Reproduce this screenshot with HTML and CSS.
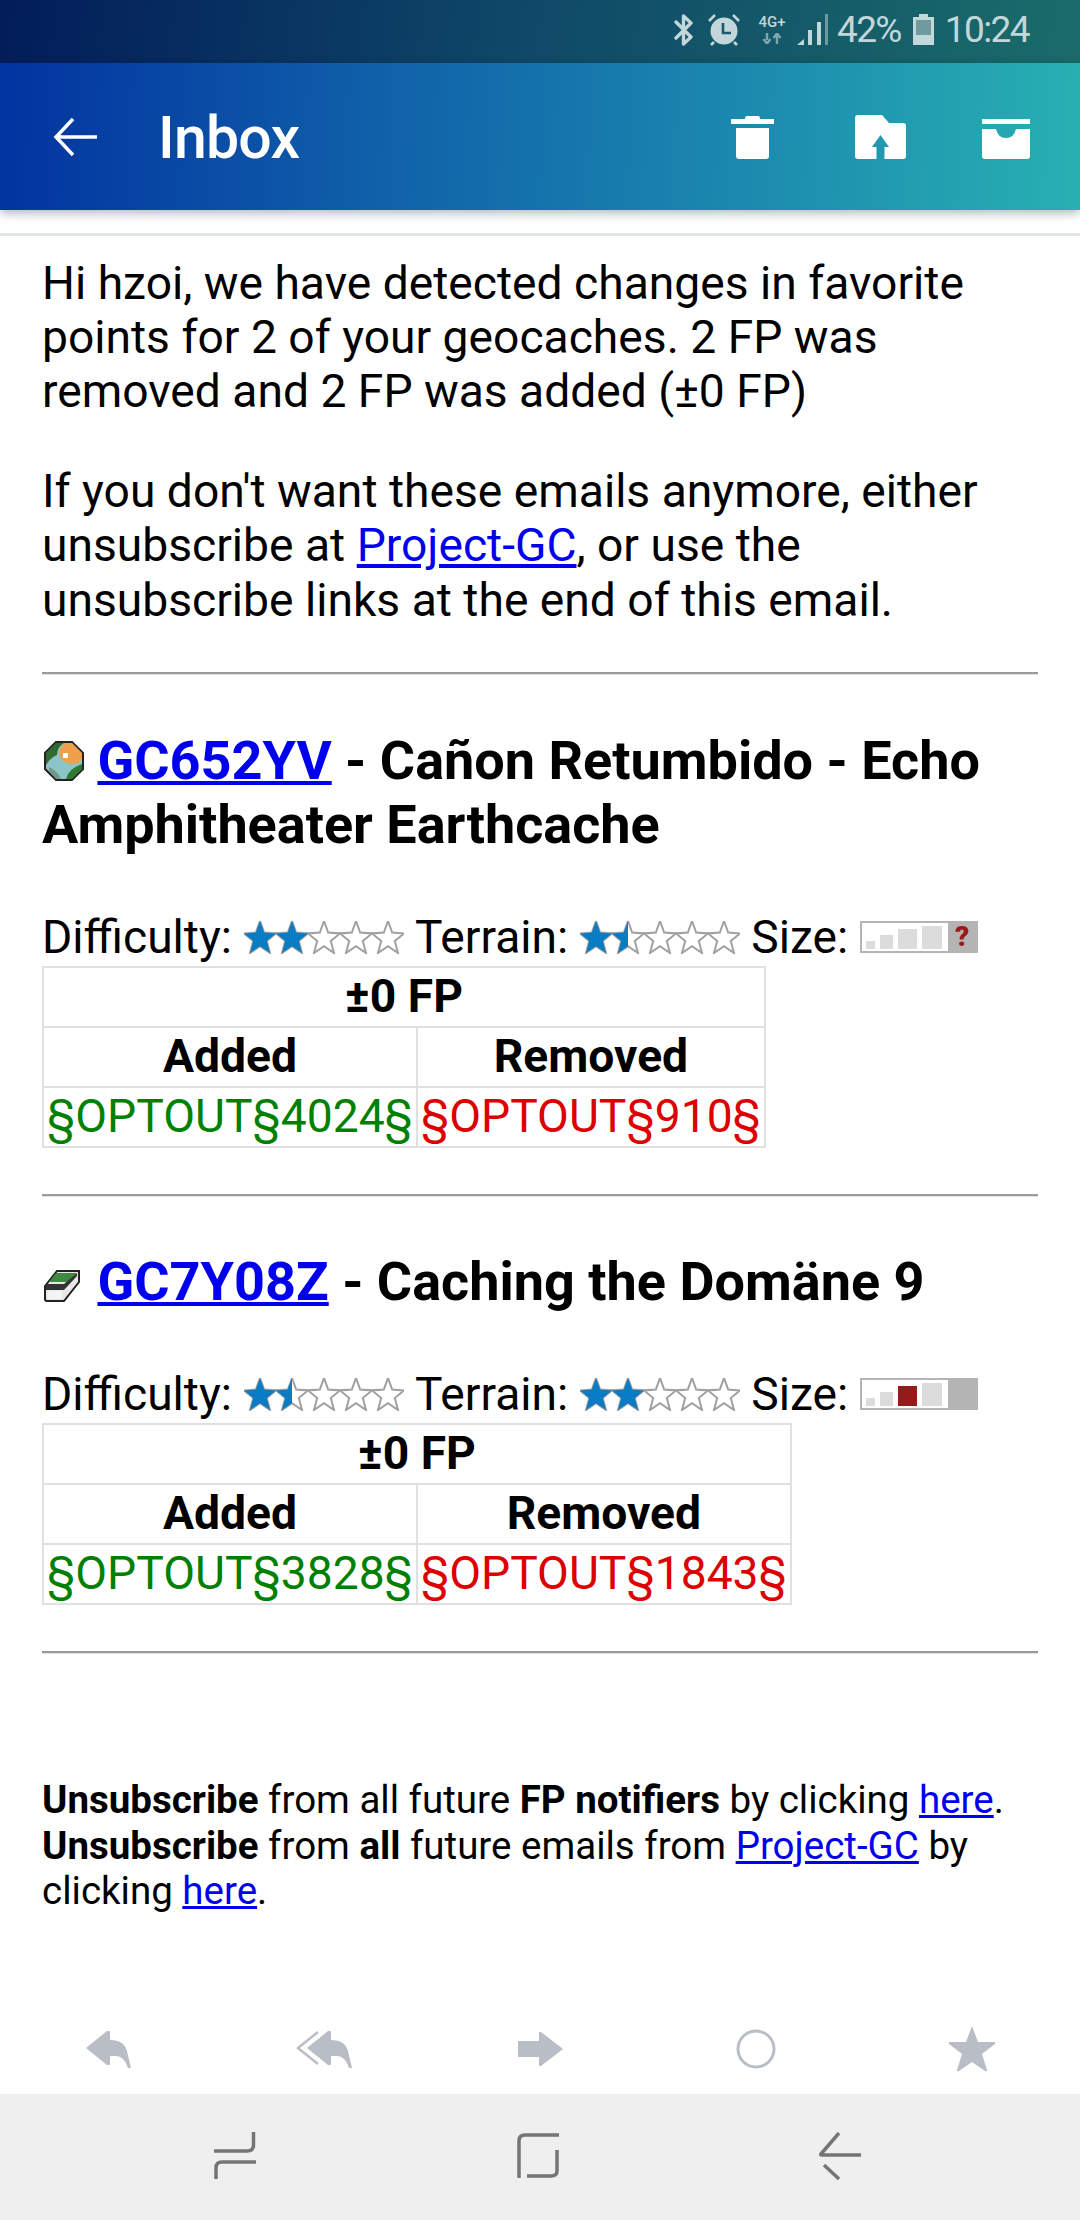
FILE: index.html
```html
<!DOCTYPE html>
<html lang="en">
<head>
  <meta charset="UTF-8" />
  <title>Inbox</title>
  <link rel="stylesheet" href="styles.css">
</head>
<body>
  <svg class="defs" width="0" height="0">
    <defs>
      <path id="star" d="M16 0 L20.2 11.6 L32 12.4 L22.8 20 L26 32 L16 25.2 L6 32 L9.2 20 L0 12.4 L11.8 11.6Z"/>
      <g id="empty-stars">
        <use href="#star" x="0" class="star-empty"/>
        <use href="#star" x="32" class="star-empty"/>
        <use href="#star" x="64" class="star-empty"/>
        <use href="#star" x="96" class="star-empty"/>
        <use href="#star" x="128" class="star-empty"/>
      </g>
      <clipPath id="half"><rect x="0" y="0" width="48" height="33"/></clipPath>
    </defs>
  </svg>

  <div class="status-bar">
    <svg class="st-icon" width="20" height="32" viewBox="0 0 20 32"><path d="M2 8 L17 23 L9.5 30 V2 L17 9 L2 24" fill="none" stroke="#c3d6da" stroke-width="3.4" stroke-linejoin="round" stroke-linecap="round"/></svg>
    <svg class="st-icon st-alarm" width="32" height="32" viewBox="0 0 32 32">
      <circle cx="16" cy="17" r="13.5" fill="#c3d6da"/>
      <path d="M15 9 V19 H23" fill="none" stroke="#1a5a70" stroke-width="2.6"/>
      <path d="M1 7 L7 1 M25 1 L31 7 M6 28 L3 31 M26 28 L29 31" stroke="#c3d6da" stroke-width="2.6" fill="none"/>
    </svg>
    <div class="net">
      <span class="net-label">4G+</span>
      <svg width="20" height="11" viewBox="0 0 20 11"><path d="M5 0 V7 M1.5 6 L5 10.500 L8.500 6 M15 11 V3 M11.500 5 L15 0.500 L18.500 5" fill="none" stroke="#7fa5ad" stroke-width="2.4"/></svg>
    </div>
    <svg class="st-icon st-signal" width="32" height="32" viewBox="0 0 32 32">
      <path d="M0 31 L7 25 V31Z" fill="#c3d6da"/>
      <rect x="11" y="16" width="4" height="15" fill="#c3d6da"/>
      <rect x="20" y="8" width="4" height="23" fill="#c3d6da"/>
      <rect x="28" y="0" width="3" height="31" fill="#6f99a0"/>
    </svg>
    <span class="st-text st-pct">42%</span>
    <svg class="st-icon st-batt" width="22" height="32" viewBox="0 0 22 32">
      <path d="M6 0 H15 V3 H21 V31 H0 V3 H6Z" fill="#c3d6da"/>
      <rect x="3" y="6" width="15" height="15" fill="#6f9aa0"/>
    </svg>
    <span class="st-text">10:24</span>
  </div>

  <header class="toolbar">
    <svg class="back" width="44" height="40" viewBox="0 0 44 40"><path d="M20 2 L3 20 L20 38 M3 20 H44" fill="none" stroke="#fff" stroke-width="3.500"/></svg>
    <span class="title">Inbox</span>
    <div class="actions">
      <svg width="43" height="44" viewBox="0 0 43 44"><path d="M14 3 Q14 1 16 1 H27 Q29 1 29 3 V4 H43 V9 H0 V4 H14Z M5 13 H38 V41 Q38 44 35 44 H8 Q5 44 5 41Z" fill="#fff"/></svg>
      <svg width="51" height="44" viewBox="0 0 51 44"><path d="M0 3 Q0 0 3 0 H27 L34 8 H48 Q51 8 51 11 V41 Q51 44 48 44 H29.500 V32 H34 L25.500 20 L17 32 H21.500 V44 H3 Q0 44 0 41Z" fill="#fff"/></svg>
      <svg width="48" height="40" viewBox="0 0 48 40"><path d="M0 0 H48 V5 H0Z M0 10 H14 Q16 19 24 19 Q32 19 34 10 H48 V37 Q48 40 45 40 H3 Q0 40 0 37Z" fill="#fff"/></svg>
    </div>
  </header>

  <main class="mail">
    <hr class="top-rule">
    <p>Hi hzoi, we have detected changes in favorite points for 2 of your geocaches. 2 FP was removed and 2 FP was added (±0 FP)</p>
    <p>If you don't want these emails anymore, either unsubscribe at <a href="#">Project-GC</a>, or use the unsubscribe links at the end of this email.</p>
    <hr>

    <h3>
      <svg class="cache-icon" width="40" height="40" viewBox="0 0 40 40">
        <path d="M12 1 H28 L39 12 V28 L28 39 H12 L1 28 V12Z" fill="#8cc4c8" stroke="#222" stroke-width="2"/>
        <path d="M12 2 H20 Q13 6 13 14 Q7 16 2 24 V12Z" fill="#2f6b2f"/>
        <path d="M20 2 H28 L38 12 V18 Q34 24 26 23 Q16 20 15 12 Q16 6 20 2Z" fill="#f0a04a"/>
        <path d="M38 23 V28 L28 38 H22 Q24 28 38 23Z" fill="#2f7a2f"/>
        <path d="M5 26 Q14 30 17 38 H12 L5 30Z" fill="#6f9a8a"/>
        <rect x="19" y="12" width="5" height="5" fill="#fff"/>
      </svg>
      <a href="#">GC652YV</a> - Cañon Retumbido - Echo Amphitheater Earthcache
    </h3>
    <div class="attrs">
      <span>Difficulty:</span>
      <svg class="stars" width="160" height="33" viewBox="0 0 160 33"><use href="#empty-stars"/><g class="star-full"><use href="#star" x="0"/><use href="#star" x="32"/></g></svg>
      <span>Terrain:</span>
      <svg class="stars" width="160" height="33" viewBox="0 0 160 33"><use href="#empty-stars"/><g class="star-full" clip-path="url(#half)"><use href="#star" x="0"/><use href="#star" x="32"/></g></svg>
      <span>Size:</span>
      <div class="size-box">
        <div class="size-bars">
          <i class="bar bar-1"></i><i class="bar bar-2"></i><i class="bar bar-3"></i><i class="bar bar-4"></i>
        </div>
        <div class="size-end"><span class="size-q">?</span></div>
      </div>
    </div>
    <table>
      <tr><th colspan="2">±0 FP</th></tr>
      <tr><th>Added</th><th>Removed</th></tr>
      <tr><td class="added">§OPTOUT§4024§</td><td class="removed">§OPTOUT§910§</td></tr>
    </table>
    <hr class="after-table">

    <h3 class="single">
      <svg class="cache-icon box-icon" width="36" height="32" viewBox="0 0 36 32">
        <path d="M1 16 L13 1 H35 V12 L20 31 H3 Q1 31 1 29Z" fill="#e8e8e8" stroke="#222" stroke-width="2"/>
        <path d="M12 3 H33 L24 12 H5Z" fill="#3f8a3f"/>
        <path d="M2 14 H20 L33 3 V6 L20 20 H2Z" fill="#333"/>
        <rect x="4" y="21" width="14" height="8" fill="#f4f4f4"/>
      </svg>
      <a href="#">GC7Y08Z</a> - Caching the Domäne 9
    </h3>
    <div class="attrs">
      <span>Difficulty:</span>
      <svg class="stars" width="160" height="33" viewBox="0 0 160 33"><use href="#empty-stars"/><g class="star-full" clip-path="url(#half)"><use href="#star" x="0"/><use href="#star" x="32"/></g></svg>
      <span>Terrain:</span>
      <svg class="stars" width="160" height="33" viewBox="0 0 160 33"><use href="#empty-stars"/><g class="star-full"><use href="#star" x="0"/><use href="#star" x="32"/></g></svg>
      <span>Size:</span>
      <div class="size-box">
        <div class="size-bars">
          <i class="bar bar-1"></i><i class="bar bar-2"></i><i class="bar bar-3 on"></i><i class="bar bar-4"></i>
        </div>
        <div class="size-end"></div>
      </div>
    </div>
    <table>
      <tr><th colspan="2">±0 FP</th></tr>
      <tr><th>Added</th><th>Removed</th></tr>
      <tr><td class="added">§OPTOUT§3828§</td><td class="removed">§OPTOUT§1843§</td></tr>
    </table>
    <hr class="after-table">

    <div class="foot">
      <b>Unsubscribe</b> from all future <b>FP notifiers</b> by clicking <a href="#">here</a>.<br>
      <b>Unsubscribe</b> from <b>all</b> future emails from <a href="#">Project-GC</a> by clicking <a href="#">here</a>.
    </div>
  </main>

  <div class="mail-actions">
    <svg width="45" height="37" viewBox="0 0 45 37"><path d="M0 17 L21 0 H24 V9 Q38 9 41 20 L45 37 H42 Q38 25 30 25 H24 V34 H21Z" fill="#b9bec6"/></svg>
    <svg width="57" height="37" viewBox="0 0 57 37">
      <path d="M22 1 L2 17 L22 33" fill="none" stroke="#b9bec6" stroke-width="2.500"/>
      <path d="M11 17 L32 0 H35 V9 Q49 9 52 20 L56 37 H53 Q49 25 41 25 H35 V34 H32Z" fill="#b9bec6"/>
    </svg>
    <svg width="45" height="34" viewBox="0 0 45 34"><path d="M21 0 H23 L45 17 L23 34 H21 V25 H0 V9 H21Z" fill="#b9bec6"/></svg>
    <svg width="40" height="40" viewBox="0 0 40 40"><circle cx="20" cy="20" r="18" fill="none" stroke="#b9bec6" stroke-width="3"/></svg>
    <svg width="48" height="46" viewBox="0 0 48 46"><path d="M24 0 L30 16 L46 16 Q48 16 47 18 L34 28 L39 44 Q39 46 37 45 L24 36 L11 45 Q9 46 9 44 L14 28 L1 18 Q0 16 2 16 L18 16Z" fill="#b9bec6"/></svg>
  </div>

  <nav class="nav-bar">
    <svg width="42" height="48" viewBox="0 0 42 48"><path d="M39.500 0 V13 Q39.500 19 33 19 H0 M42 30 H8 Q2 30 2 36 V47" fill="none" stroke="#757575" stroke-width="3.500"/></svg>
    <svg width="42" height="46" viewBox="0 0 42 46"><path d="M2 45 V8 Q2 2 8 2 H42 M40 17 V38 Q40 43 34 43 H10" fill="none" stroke="#757575" stroke-width="3.500"/></svg>
    <svg width="42" height="48" viewBox="0 0 42 48"><path d="M20 1 L2 22 Q1 23 3 23 H42 M5 33 L20 47" fill="none" stroke="#757575" stroke-width="3.500"/></svg>
  </nav>
</body>
</html>
```

FILE: styles.css
```css
* {
  box-sizing: border-box;
}
html, body {
  margin: 0;
  padding: 0;
}
body {
  width: 1080px;
  height: 2220px;
  display: flex;
  flex-direction: column;
  overflow: hidden;
  background: #fff;
  font-family: Roboto, sans-serif;
}
.defs {
  position: absolute;
}
.status-bar {
  height: 63px;
  flex: none;
  display: flex;
  align-items: center;
  justify-content: flex-end;
  padding: 0 51px 3px 0;
  background: linear-gradient(100deg, #021c5a 0%, #0f4a68 50%, #1a6c6a 100%);
  color: #c3d6da;
}
.st-icon {
  flex: none;
  display: block;
}
.st-alarm {
  margin-left: 14px;
}
.net {
  margin-left: 16px;
  width: 32px;
  display: flex;
  flex-direction: column;
  align-items: center;
  gap: 5px;
}
.net-label {
  font-size: 15px;
  line-height: 12px;
  font-weight: 500;
}
.st-signal {
  margin-left: 9px;
}
.st-text {
  font-size: 37px;
  line-height: 40px;
  letter-spacing: -1.6px;
}
.st-pct {
  margin-left: 8px;
}
.st-batt {
  margin: 0 10px 0 12px;
}
.toolbar {
  height: 147px;
  flex: none;
  display: flex;
  align-items: center;
  padding: 0 50px 0 53px;
  background: linear-gradient(92deg, #0233a0 0%, #0e5aa8 30%, #1a85ae 65%, #28b0b2 100%);
  color: #fff;
  position: relative;
  z-index: 2;
  box-shadow: 0 3px 10px rgba(0,0,0,0.3);
}
.back {
  flex: none;
}
.title {
  margin-left: 61px;
  padding-top: 2px;
  font-size: 59px;
  font-weight: 500;
  letter-spacing: -0.8px;
}
.actions {
  margin-left: auto;
  display: flex;
  align-items: flex-end;
  gap: 81px;
}
.actions svg {
  display: block;
}
.actions svg:last-child {
  margin-left: -5px;
}
.mail {
  flex: 1;
  padding: 23px 42px 0;
  color: #000;
  font-size: 46.2px;
  line-height: 54.2px;
}
.mail hr {
  margin: 0;
  height: 3px;
  border: none;
  border-top: 2px solid #9a9a9a;
  border-bottom: 1px solid #e2e2e2;
}
.mail hr.top-rule {
  margin: 0 -42px 20px;
  border: none;
  height: 3px;
  background: #e1e5e5;
}
.mail p {
  margin: 0 0 45.5px;
}
.mail a {
  color: #0000ee;
  text-decoration: underline;
}
.mail h3 {
  margin: 54px 0 0;
  font-size: 54px;
  line-height: 63.4px;
  font-weight: 700;
}
.mail h3 a {
  text-decoration-thickness: 4px;
}
.cache-icon {
  vertical-align: -2px;
  margin: 0 0 0 2px;
}
.box-icon {
  margin-right: 4px;
}
.attrs {
  margin-top: 52px;
  display: flex;
  align-items: center;
  height: 58px;
  white-space: nowrap;
}
.stars {
  margin: 0 11px 0 12px;
  flex: none;
}
.star-empty {
  fill: #fff;
  stroke: #a0a0a0;
  stroke-width: 2;
}
.star-full {
  fill: #0a7cc4;
}
.size-box {
  flex: none;
  margin-left: 12px;
  width: 118px;
  height: 32px;
  display: flex;
  background: #b4b4b4;
  padding: 2px;
}
.size-bars {
  width: 86px;
  background: #fff;
  display: flex;
  align-items: flex-end;
  gap: 5px;
  padding: 0 5px 2px 4px;
}
.size-end {
  flex: 1;
  display: flex;
  align-items: center;
  justify-content: center;
}
.size-q {
  color: #9a1a1a;
  font-size: 28px;
  line-height: 28px;
  font-weight: 900;
}
.bar {
  display: block;
  background: #dcdcdc;
}
.bar-1 {
  width: 9px;
  height: 8px;
}
.bar-2 {
  width: 13px;
  height: 14px;
}
.bar-3 {
  width: 19px;
  height: 20px;
}
.bar-4 {
  width: 20px;
  height: 23px;
}
.bar.on {
  background: #961a1a;
}
.mail table {
  border-collapse: collapse;
  border: 2px solid #e0e0e0;
}
.mail th, .mail td {
  border: 2px solid #e0e0e0;
  padding: 1px 3px 3px;
  text-align: center;
  font-size: 46.2px;
  line-height: 54px;
  white-space: nowrap;
}
.mail th {
  font-weight: 700;
}
.added {
  color: #008000;
}
.removed {
  color: #dc0000;
}
.after-table {
  margin-top: 46px !important;
}
.mail h3.single {
  margin-top: 53px;
}
.foot {
  margin-top: 123px;
  font-size: 38.5px;
  line-height: 45.2px;
}
.mail-actions {
  height: 100px;
  flex: none;
  display: grid;
  grid-template-columns: repeat(5, 216px);
  justify-items: center;
  align-items: center;
  padding-top: 10px;
}
.mail-actions svg {
  display: block;
}
.nav-bar {
  height: 126px;
  flex: none;
  display: flex;
  align-items: center;
  background: #efefef;
  padding: 0 219px 2px 214px;
  justify-content: space-between;
}
.nav-bar svg {
  display: block;
}
```
